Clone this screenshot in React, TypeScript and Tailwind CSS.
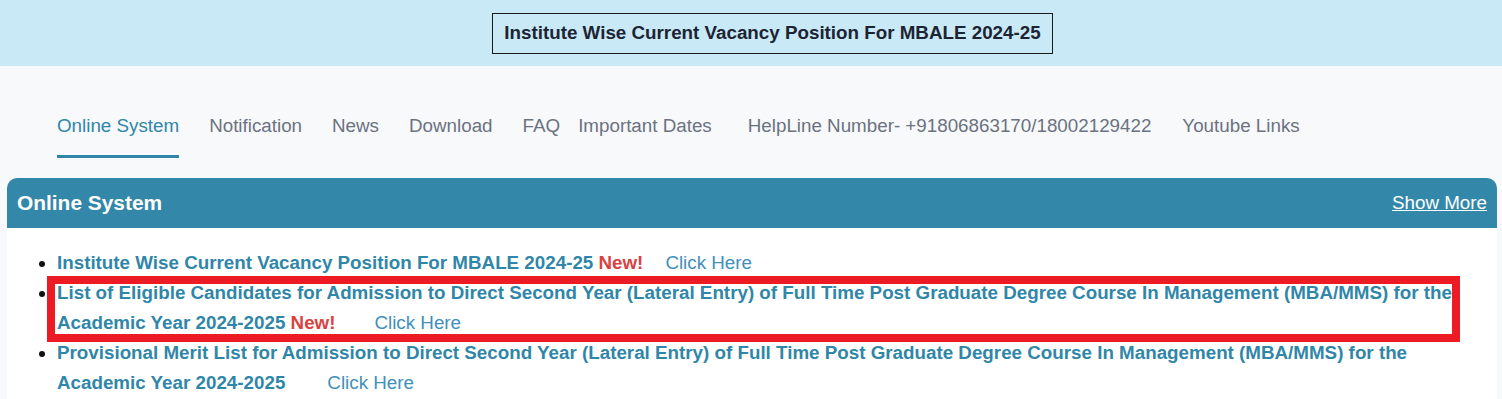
import React from 'react';

const navItems = [
  { label: 'Online System', active: true, ml: 'ml-0' },
  { label: 'Notification', ml: 'ml-[30px]' },
  { label: 'News', ml: 'ml-[30px]' },
  { label: 'Download', ml: 'ml-[30px]' },
  { label: 'FAQ', ml: 'ml-[30px]' },
  { label: 'Important Dates', ml: 'ml-[18px]' },
  { label: 'HelpLine Number- +91806863170/18002129422', ml: 'ml-[36px]' },
  { label: 'Youtube Links', ml: 'ml-[31px]' },
];

export default function App() {
  return (
    <div className="min-h-screen bg-[#f8f9fb] font-['Liberation_Sans',Arial,sans-serif]">
      <div className="h-[66px] bg-[#c9e9f6] flex items-center justify-center pl-[43px]">
        <div className="h-[41px] px-[11px] flex items-center border border-[#1a1a1a] text-[18.8px] font-bold text-[#1c2433]">
          Institute Wise Current Vacancy Position For MBALE 2024-25
        </div>
      </div>

      <nav className="flex pl-[57px] h-[112px]">
        {navItems.map((item) => (
          <div
            key={item.label}
            className={`${item.ml} pt-[48px] h-[92px] text-[18.8px] leading-[24px] whitespace-nowrap ${
              item.active
                ? 'text-[#2f86a8] border-b-[3px] border-[#2f86a8]'
                : 'text-[#6b7280]'
            }`}
          >
            {item.label}
          </div>
        ))}
      </nav>

      <div className="ml-[7px] mr-[5px] bg-white rounded-t-[10px]">
        <div className="h-[50px] bg-[#3387a9] rounded-t-[10px] flex items-center justify-between px-[10px]">
          <span className="text-white text-[20.9px] font-bold">Online System</span>
          <a href="#" className="text-white text-[18.8px] underline">
            Show More
          </a>
        </div>

        <ul className="list-disc pl-[50px] pr-[10px] pt-[20px] pb-[10px] text-[18.8px] leading-[30px] marker:text-[#111]">
          <li>
            <span className="font-bold text-[#2f86a8]">
              Institute Wise Current Vacancy Position For MBALE 2024-25
            </span>{' '}
            <span className="font-bold text-[#d9423f]">New!</span>
            <span className="ml-[22px] text-[#3f90bb]">Click Here</span>
          </li>
          <li className="relative">
            <span className="font-bold text-[#2f86a8]">
              List of Eligible Candidates for Admission to Direct Second Year (Lateral Entry) of Full Time Post
              Graduate Degree Course In Management (MBA/MMS) for the Academic Year 2024-2025
            </span>{' '}
            <span className="font-bold text-[#d9423f]">New!</span>
            <span className="ml-[39px] text-[#3f90bb]">Click Here</span>
            <div className="absolute left-[-10px] top-[-2px] w-[1413px] h-[66px] border-[8px] border-[#ed1c24] pointer-events-none" />
          </li>
          <li>
            <span className="font-bold text-[#2f86a8]">
              Provisional Merit List for Admission to Direct Second Year (Lateral Entry) of Full Time Post Graduate
              Degree Course In Management (MBA/MMS) for the Academic Year 2024-2025
            </span>
            <span className="ml-[42px] text-[#3f90bb]">Click Here</span>
          </li>
        </ul>
      </div>
    </div>
  );
}
